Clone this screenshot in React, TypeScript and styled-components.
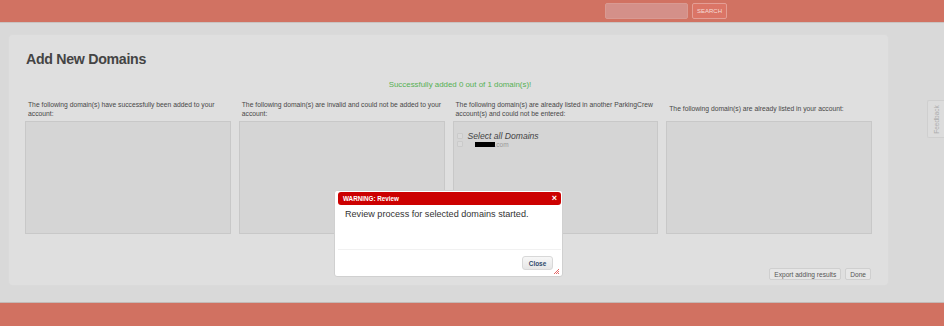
import React from "react";
import styled, { createGlobalStyle } from "styled-components";

const GlobalStyle = createGlobalStyle`
  html, body {
    margin: 0;
    padding: 0;
    background: #d9d9d9;
    font-family: "Liberation Sans", Arial, sans-serif;
  }
  * {
    box-sizing: border-box;
  }
`;

const Page = styled.div`
  position: relative;
  width: 944px;
  height: 326px;
  display: flex;
  flex-direction: column;
  overflow: hidden;
`;

const TopBar = styled.div`
  height: 22px;
  flex: none;
  background: #d17262;
  display: flex;
  align-items: center;
  padding-right: 217px;
  justify-content: flex-end;
  gap: 4px;
  box-shadow: 0 1px 0 #c9c3c1;
`;

const SearchInput = styled.div`
  width: 83px;
  height: 16px;
  border-radius: 2px;
  background: #d49089;
  border: 1px solid #d99a92;
`;

const SearchButton = styled.div`
  width: 35px;
  height: 16px;
  border: 1px solid #e49e95;
  border-radius: 2px;
  background: #db7566;
  color: #f6dcd6;
  font-size: 6px;
  display: flex;
  align-items: center;
  justify-content: center;
`;

const Main = styled.div`
  flex: 1;
  padding: 13px 56px 18px 9px;
  display: flex;
`;

const Card = styled.div`
  flex: 1;
  background: #dfdfdf;
  border-radius: 4px;
  box-shadow: 0 0 0 1px #dadada;
  padding: 15px 16px 5px 16px;
  display: flex;
  flex-direction: column;
`;

const Title = styled.h1`
  margin: 0;
  padding-left: 1px;
  font-size: 14.2px;
  letter-spacing: -0.3px;
  font-weight: bold;
  color: #444;
  line-height: 18px;
`;

const Success = styled.div`
  margin-top: 12px;
  padding-left: 23px;
  text-align: center;
  color: #55b054;
  font-size: 7.9px;
  line-height: 10px;
`;

const Columns = styled.div`
  margin-top: 9px;
  display: grid;
  grid-template-columns: repeat(4, 1fr);
  gap: 8px;
`;

const Column = styled.div`
  display: flex;
  flex-direction: column;
`;

const Label = styled.div`
  height: 21px;
  display: flex;
  align-items: center;
  padding: 0 0 0 3px;
  font-size: 6.75px;
  line-height: 8.8px;
  color: #474747;
`;

const Box = styled.div`
  margin-top: 1px;
  height: 113px;
  background: #d5d5d5;
  border: 1px solid #c8c8c8;
  padding: 10px 3px;
`;

const CheckRow = styled.div`
  display: flex;
  align-items: center;
  height: 8px;
  gap: 5px;
`;

const Check = styled.span`
  width: 6px;
  height: 6px;
  border: 1px solid #cacaca;
  border-radius: 1px;
  background: #d9d9d9;
  flex: none;
`;

const SelectAll = styled.span`
  font-style: italic;
  font-size: 8.6px;
  color: #444;
`;

const Domain = styled.span`
  margin-left: 7px;
  font-size: 6.5px;
  color: #999;
  display: flex;
  align-items: center;
`;

const Redacted = styled.span`
  display: inline-block;
  width: 20px;
  height: 5px;
  background: #000;
`;

const Footer = styled.div`
  margin-top: auto;
  display: flex;
  justify-content: flex-end;
  gap: 4px;
  padding-right: 1px;
`;

const Button = styled.div`
  height: 12px;
  padding: 0 4px;
  border: 1px solid #cfcfcf;
  border-radius: 2px;
  background: #e6e6e6;
  color: #555;
  font-size: 6.6px;
  display: flex;
  align-items: center;
`;

const BottomBar = styled.div`
  height: 23px;
  flex: none;
  background: #d17161;
  box-shadow: 0 -1px 0 #c4b9b6;
`;

const Feedback = styled.div`
  position: absolute;
  left: 927px;
  top: 100px;
  width: 17px;
  height: 38px;
  border: 1px solid #cfcfcf;
  border-right: none;
  border-radius: 2px 0 0 2px;
  background: #dcdcdc;
  display: flex;
  align-items: center;
  justify-content: center;
`;

const FeedbackText = styled.span`
  transform: rotate(-90deg);
  font-size: 6.5px;
  color: #adadad;
  white-space: nowrap;
`;

const Modal = styled.div`
  position: absolute;
  left: 334px;
  top: 190px;
  width: 229px;
  height: 87px;
  background: #fff;
  border-radius: 3px;
  border: 1px solid #d0d0d0;
  padding: 1px 1px 0 3px;
  display: flex;
  flex-direction: column;
`;

const ModalHeader = styled.div`
  height: 13px;
  flex: none;
  background: #cc0000;
  border-radius: 3px;
  display: flex;
  align-items: center;
  justify-content: space-between;
  padding: 0 4px 0 5px;
  color: #fff;
  font-size: 6.3px;
  font-weight: bold;
`;

const CloseX = styled.span`
  font-size: 9px;
  font-weight: bold;
  line-height: 1;
`;

const ModalBody = styled.div`
  height: 45px;
  flex: none;
  padding: 4px 0 0 7px;
  font-size: 9.1px;
  color: #333;
  border-bottom: 1px solid #f1f1f1;
`;

const ModalFooter = styled.div`
  position: relative;
  flex: 1;
  display: flex;
  align-items: center;
  justify-content: flex-end;
  padding-right: 8px;
`;

const CloseButton = styled.div`
  width: 31px;
  height: 14px;
  border: 1px solid #d8d8d8;
  border-radius: 3px;
  background: linear-gradient(#f7f7f7, #e6e6e6);
  color: #2f4a6c;
  font-size: 6.4px;
  font-weight: bold;
  display: flex;
  align-items: center;
  justify-content: center;
`;

const Grip = styled.svg`
  position: absolute;
  right: 1px;
  bottom: 1px;
`;

export default function App() {
  return (
    <Page>
      <GlobalStyle />
      <TopBar>
        <SearchInput />
        <SearchButton>SEARCH</SearchButton>
      </TopBar>
      <Main>
        <Card>
          <Title>Add New Domains</Title>
          <Success>Successfully added 0 out of 1 domain(s)!</Success>
          <Columns>
            <Column>
              <Label>
                The following domain(s) have successfully been added to your
                account:
              </Label>
              <Box />
            </Column>
            <Column>
              <Label>
                The following domain(s) are invalid and could not be added to
                your account:
              </Label>
              <Box />
            </Column>
            <Column>
              <Label>
                The following domain(s) are already listed in another
                ParkingCrew account(s) and could not be entered:
              </Label>
              <Box>
                <CheckRow>
                  <Check />
                  <SelectAll>Select all Domains</SelectAll>
                </CheckRow>
                <CheckRow>
                  <Check />
                  <Domain>
                    <Redacted />
                    .com
                  </Domain>
                </CheckRow>
              </Box>
            </Column>
            <Column>
              <Label>
                The following domain(s) are already listed in your account:
              </Label>
              <Box />
            </Column>
          </Columns>
          <Footer>
            <Button>Export adding results</Button>
            <Button>Done</Button>
          </Footer>
        </Card>
      </Main>
      <BottomBar />
      <Feedback>
        <FeedbackText>Feedback</FeedbackText>
      </Feedback>
      <Modal>
        <ModalHeader>
          <span>WARNING: Review</span>
          <CloseX>×</CloseX>
        </ModalHeader>
        <ModalBody>Review process for selected domains started.</ModalBody>
        <ModalFooter>
          <CloseButton>Close</CloseButton>
          <Grip width="7" height="7" viewBox="0 0 7 7">
            <path d="M6 1L1 6M6 3L3 6M6 5L5 6" stroke="#d44" strokeWidth="0.8" />
          </Grip>
        </ModalFooter>
      </Modal>
    </Page>
  );
}
